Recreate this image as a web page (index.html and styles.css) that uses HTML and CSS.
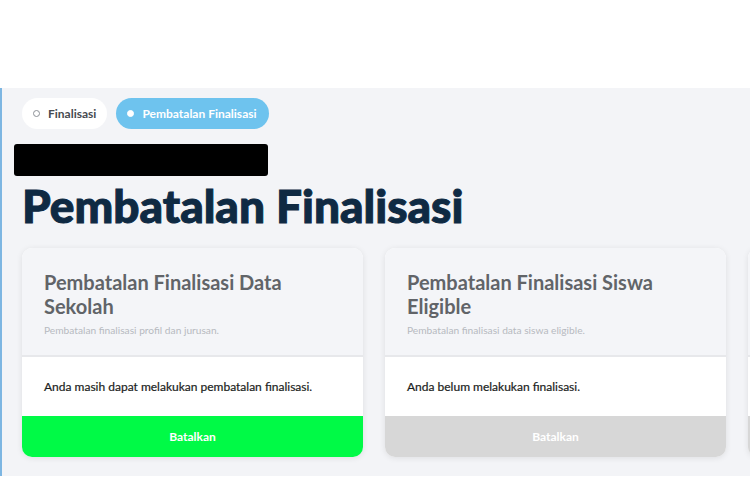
FILE: index.html
```html
<!DOCTYPE html>
<html lang="id">
<head>
  <meta charset="UTF-8">
  <meta name="viewport" content="width=device-width, initial-scale=1.0">
  <title>Pembatalan Finalisasi</title>
  <link rel="stylesheet" href="styles.css">
</head>
<body>

<div class="topbar"></div>

<div class="main">
  <div class="tabs">
    <span class="pill"><span class="dot"></span>Finalisasi</span>
    <span class="pill active"><span class="dot"></span>Pembatalan Finalisasi</span>
  </div>

  <div class="redacted"></div>

  <h1>Pembatalan Finalisasi</h1>

  <div class="cards">
    <div class="card">
      <div class="card-head">
        <h3>Pembatalan Finalisasi Data Sekolah</h3>
        <p class="sub">Pembatalan finalisasi profil dan jurusan.</p>
      </div>
      <div class="card-body">Anda masih dapat melakukan pembatalan finalisasi.</div>
      <button class="btn go">Batalkan</button>
    </div>

    <div class="card">
      <div class="card-head">
        <h3>Pembatalan Finalisasi Siswa Eligible</h3>
        <p class="sub">Pembatalan finalisasi data siswa eligible.</p>
      </div>
      <div class="card-body">Anda belum melakukan finalisasi.</div>
      <button class="btn off">Batalkan</button>
    </div>

    <!-- next card, only its edge shows -->
    <div class="card">
      <div class="card-head"></div>
      <div class="card-body"></div>
      <div class="btn off"></div>
    </div>
  </div>
</div>

</body>
</html>
```

FILE: styles.css
```css
body {
  margin: 0;
  font-family: Lato, "Open Sans", sans-serif;
  background-color: #fff;
}
.topbar {
  height: 88px;
}
.main {
  height: 388px;
  box-sizing: border-box;
  padding: 10px 0 0 20px;
  background-color: #f3f4f7;
  border-left: 2px solid #7db6e2;
  overflow: hidden;
}
.tabs {
  display: flex;
  gap: 9px;
}
.pill {
  display: flex;
  align-items: center;
  gap: 8px;
  height: 31px;
  padding: 0 11px 0 11px;
  border-radius: 16px;
  background-color: #fff;
  color: #464a50;
  font-size: 12px;
  font-weight: 700;
}
.pill .dot {
  width: 5px;
  height: 5px;
  border: 1px solid #8c9096;
  border-radius: 50%;
}
.pill.active {
  background-color: #6ec3ee;
  color: #fff;
  padding: 0 12px 0 11px;
}
.pill.active .dot {
  background-color: #fff;
  border-color: #fff;
}
.redacted {
  width: 254px;
  height: 32px;
  margin: 15px 0 0 -8px;
  background-color: #000;
  border-radius: 3px;
}
h1 {
  margin: 2px 0 0;
  font-size: 46px;
  line-height: 1.2;
  font-weight: 900;
  color: #0f2a43;
  -webkit-text-stroke: 1px #0f2a43;
}
.cards {
  display: flex;
  gap: 22px;
  margin-top: 15px;
}
.card {
  flex: 0 0 341px;
  display: flex;
  flex-direction: column;
  border-radius: 10px;
  overflow: hidden;
  background-color: #fff;
  box-shadow: 0 1px 6px rgba(0, 0, 0, 0.09);
}
.card-head {
  height: 109px;
  box-sizing: border-box;
  padding: 22px 22px 0;
  background-color: #f4f5f8;
  border-bottom: 2px solid #e7e8eb;
}
.card-head h3 {
  margin: 0;
  width: 270px;
  font-size: 20px;
  line-height: 24px;
  font-weight: 700;
  color: #616468;
}
.card-head .sub {
  margin: 5px 0 0;
  font-size: 10.2px;
  line-height: 14px;
  color: #b7bac0;
}
.card-body {
  height: 59px;
  box-sizing: border-box;
  padding: 22px 22px 0;
  font-size: 12px;
  line-height: 16px;
  color: #1a1d21;
  -webkit-text-stroke: 0.2px #1a1d21;
}
.btn {
  height: 41px;
  border: none;
  font-family: inherit;
  font-size: 12px;
  font-weight: 700;
  color: #fff;
}
.btn.go {
  background-color: #00fa46;
}
.btn.off {
  background-color: #d7d7d7;
}
```
